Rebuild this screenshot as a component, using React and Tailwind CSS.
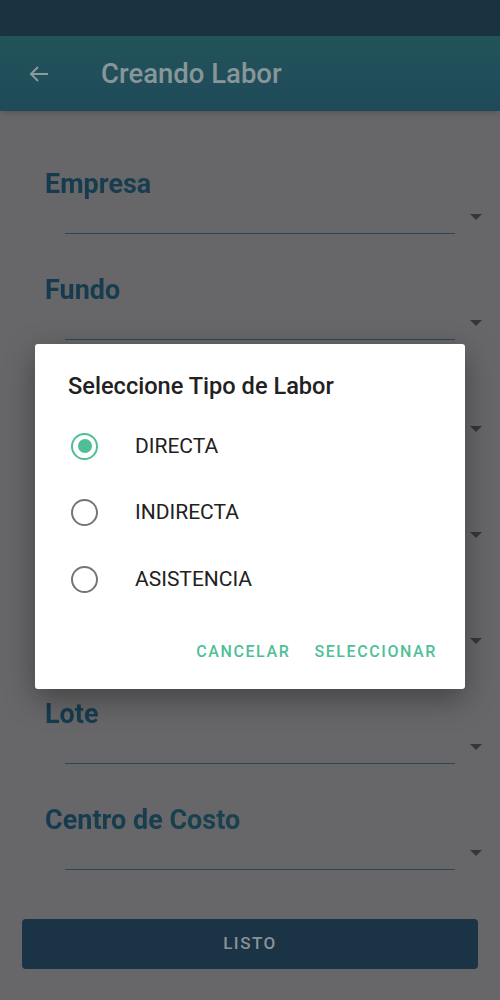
import React from "react";

// the three middle spinners sit under the dialog, so their labels are never seen
const fields = ["Empresa", "Fundo", "", "", "", "Lote", "Centro de Costo"];
const options = ["DIRECTA", "INDIRECTA", "ASISTENCIA"];

function Spinner({ label }) {
  return (
    <div className="h-[106px]">
      <p className="h-8 bg-gradient-to-r from-[#153a4f] to-[#204b4c] bg-clip-text text-[27px] font-bold leading-8 text-transparent">
        {label}
      </p>
      <div className="flex h-[34px] items-center pl-5">
        <div className="h-full flex-1 border-b border-[#2a4657]" />
        <div className="ml-[15px] h-0 w-0 border-x-[6px] border-t-[6px] border-x-transparent border-t-[#363636]" />
      </div>
    </div>
  );
}

function Radio({ checked }) {
  return (
    <div
      className={
        checked
          ? "flex h-[27px] w-[27px] items-center justify-center rounded-full border-[2.5px] border-[#4fbf95]"
          : "h-[27px] w-[27px] rounded-full border-[2.5px] border-[#757575]"
      }
    >
      {checked && <div className="h-[14px] w-[14px] rounded-full bg-[#4fbf95]" />}
    </div>
  );
}

export default function App() {
  return (
    <div className="relative h-[1000px] w-[500px] overflow-hidden bg-[#676668] font-['Roboto',sans-serif]">
      <div className="h-9 bg-[#1a3340]" />
      <header className="flex h-[75px] items-center bg-gradient-to-b from-[#22535a] to-[#1f4a59] shadow-md">
        <svg className="ml-[27px] h-6 w-6" viewBox="0 0 24 24" fill="none" stroke="#8a9a9e" strokeWidth="2">
          <path d="M21 12H4M11 5l-7 7 7 7" />
        </svg>
        <h1 className="ml-[50px] text-[27.5px] font-medium text-[#879699]">Creando Labor</h1>
      </header>

      <main className="pl-[45px] pr-[18px] pt-[57px]">
        {fields.map((f, i) => (
          <Spinner key={i} label={f} />
        ))}
      </main>

      <div className="px-[22px] pt-[9px]">
        <button className="h-[50px] w-full rounded bg-[#1a3445] text-[17px] font-medium tracking-[1.5px] text-[#8a9297]">
          LISTO
        </button>
      </div>

      <div className="absolute inset-0 flex justify-center pt-[344px]">
        <div className="h-[345px] w-[430px] rounded-[3px] bg-white shadow-[0_10px_30px_rgba(0,0,0,0.35)]">
          <h2 className="pl-[33px] pt-[28px] text-[23.6px] font-medium leading-7 text-[#212121]">
            Seleccione Tipo de Labor
          </h2>
          <div className="mt-[13px]">
            {options.map((o, i) => (
              <div key={o} className="flex h-[66.5px] items-center pl-[36px]">
                <Radio checked={i === 0} />
                <span className="ml-[37px] text-[21px] text-[#212121]">{o}</span>
              </div>
            ))}
          </div>
          <div className="mt-[27px] flex justify-end gap-6 pr-[28px] text-[16px] font-medium tracking-[1.6px] text-[#4fbf98]">
            <span>CANCELAR</span>
            <span>SELECCIONAR</span>
          </div>
        </div>
      </div>
    </div>
  );
}
